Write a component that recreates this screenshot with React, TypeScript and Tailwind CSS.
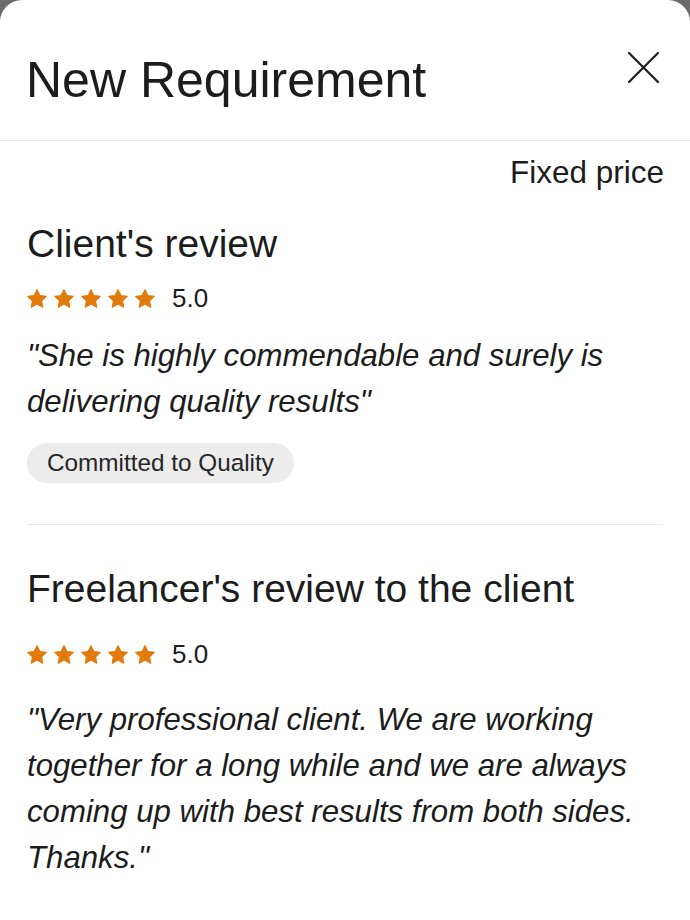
import type { ReactNode } from 'react'

const font = { fontFamily: '"Liberation Sans", Arial, sans-serif' }

function Star() {
  return (
    <svg width="20" height="19" viewBox="1 1 22 21" className="shrink-0">
      <path
        d="M12 1.8l3.1 6.4 7.1.9-5.2 4.9 1.3 7L12 17.6 5.7 21l1.3-7-5.2-4.9 7.1-.9z"
        fill="#e27b0c"
        stroke="#e27b0c"
        strokeWidth="1.4"
        strokeLinejoin="round"
      />
    </svg>
  )
}

function Rating({ value, className }: { value: string; className?: string }) {
  return (
    <div className={`flex items-center h-[19px] ${className ?? ''}`}>
      <div className="flex gap-[7px]">
        {[0, 1, 2, 3, 4].map(i => (
          <Star key={i} />
        ))}
      </div>
      <span className="ml-[17px] text-[26px] leading-[19px] text-[#1c1c1c]">{value}</span>
    </div>
  )
}

function Heading({ children, className }: { children: ReactNode; className?: string }) {
  return <h2 className={`text-[39px] leading-[48px] text-[#1c1c1c] ${className ?? ''}`}>{children}</h2>
}

function Quote({ children, className }: { children: ReactNode; className?: string }) {
  return <p className={`italic text-[31.2px] leading-[46px] text-[#1c1c1c] ${className ?? ''}`}>{children}</p>
}

export default function App() {
  return (
    <div className="w-[690px] h-[920px] bg-[#6b6b6b] overflow-hidden" style={font}>
      <div className="h-full bg-white rounded-t-[22px]">
        <header className="flex justify-between items-start pt-[50px] pb-[30px] pl-[26px] pr-[31px] border-b border-[#e6e6e6]">
          <h1 className="text-[50px] leading-[60px] text-[#1c1c1c]">New Requirement</h1>
          <button className="mt-[2px]">
            <svg width="31" height="31" viewBox="0 0 31 31">
              <path d="M1 1L30 30M30 1L1 30" stroke="#1c1c1c" strokeWidth="2.2" strokeLinecap="round" />
            </svg>
          </button>
        </header>

        <div className="px-[27px]">
          <div className="text-right text-[31.5px] leading-[40px] text-[#1c1c1c] mt-[11px] mr-[-1px]">Fixed price</div>

          <Heading className="mt-[28px]">Client's review</Heading>
          <Rating value="5.0" className="mt-[21px]" />
          <Quote className="mt-[25px]">
            "She is highly commendable and surely is delivering quality results"
          </Quote>
          <div className="mt-[18px] inline-flex items-center h-[40px] px-[20px] rounded-full bg-[#ececec] text-[24.3px] text-[#262626]">
            Committed to Quality
          </div>

          <div className="mt-[41px] border-t border-[#e6e6e6]" />

          <Heading className="mt-[40px]">Freelancer's review to the client</Heading>
          <Rating value="5.0" className="mt-[32px]" />
          <Quote className="mt-[33px]">
            "Very professional client. We are working together for a long while and we are always coming up with
            best results from both sides. Thanks."
          </Quote>
        </div>
      </div>
    </div>
  )
}
